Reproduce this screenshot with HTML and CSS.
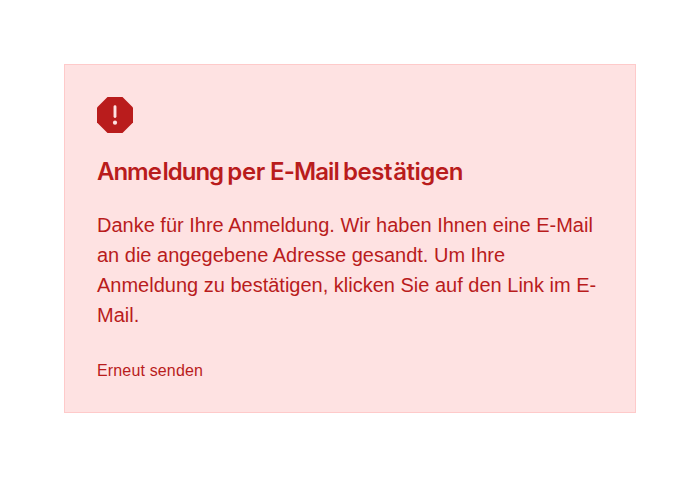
FILE: index.html
```html
<!DOCTYPE html>
<html lang="de">
<head>
<meta charset="utf-8">
<title>Anmeldung bestätigen</title>
<link rel="stylesheet" href="styles.css">
</head>
<body>
<section class="notice">
<svg class="notice-icon" viewBox="0 0 36 36" aria-hidden="true"><path fill="#b91c1c" d="M10.500 0h15L36 10.500v15L25.500 36h-15L0 25.500v-15z"/><path d="M18 9.800v9.700" stroke="#fee2e2" stroke-width="2.900" stroke-linecap="round"/><circle cx="18" cy="25.700" r="2.100" fill="#fee2e2"/></svg>
<h1 class="notice-title"><span class="word-first">Anm<span class="loose">e</span>ldung</span> <span class="word-per">per</span> <span class="word-mail">E-Mail</span> <span class="word-last">bes<span class="loose">t</span>ätigen</span></h1>
<p class="notice-text">Danke für Ihre Anmeldung. Wir haben Ihnen eine E-Mail an die angegebene Adresse gesandt. Um Ihre Anmeldung zu bestätigen, klicken Sie auf den Link im E-Mail.</p>
<a class="notice-action">Erneut senden</a>
</section>
</body>
</html>
```
FILE: styles.css
```css
body {
  margin: 0;
  padding: 64px;
  background: #fff;
  font-family: "Liberation Sans", Arial, sans-serif;
}
.notice {
  box-sizing: border-box;
  height: 349px;
  padding: 32px;
  border: 1px solid #fecaca;
  background: #fee2e2;
  color: #b91c1c;
}
.notice-icon {
  display: block;
  width: 36px;
  height: 36px;
}
.notice-title {
  margin: 24px 0 23px;
  font-family: Inter, sans-serif;
  font-size: 24px;
  font-weight: 590;
  line-height: 30px;
  letter-spacing: -0.5px;
  word-spacing: -1.3px;
}
.word-first {
  letter-spacing: -1.02px;
}
.word-per {
  margin-right: 1px;
  letter-spacing: -0.4px;
}
.word-mail {
  letter-spacing: -0.9px;
}
.word-last {
  letter-spacing: -0.45px;
}
.loose {
  letter-spacing: 0.6px;
}
.notice-text {
  margin: 0 0 29px;
  font-size: 20px;
  line-height: 30px;
}
.notice-action {
  display: block;
  font-size: 16px;
  line-height: 24px;
  letter-spacing: 0.15px;
}
```
